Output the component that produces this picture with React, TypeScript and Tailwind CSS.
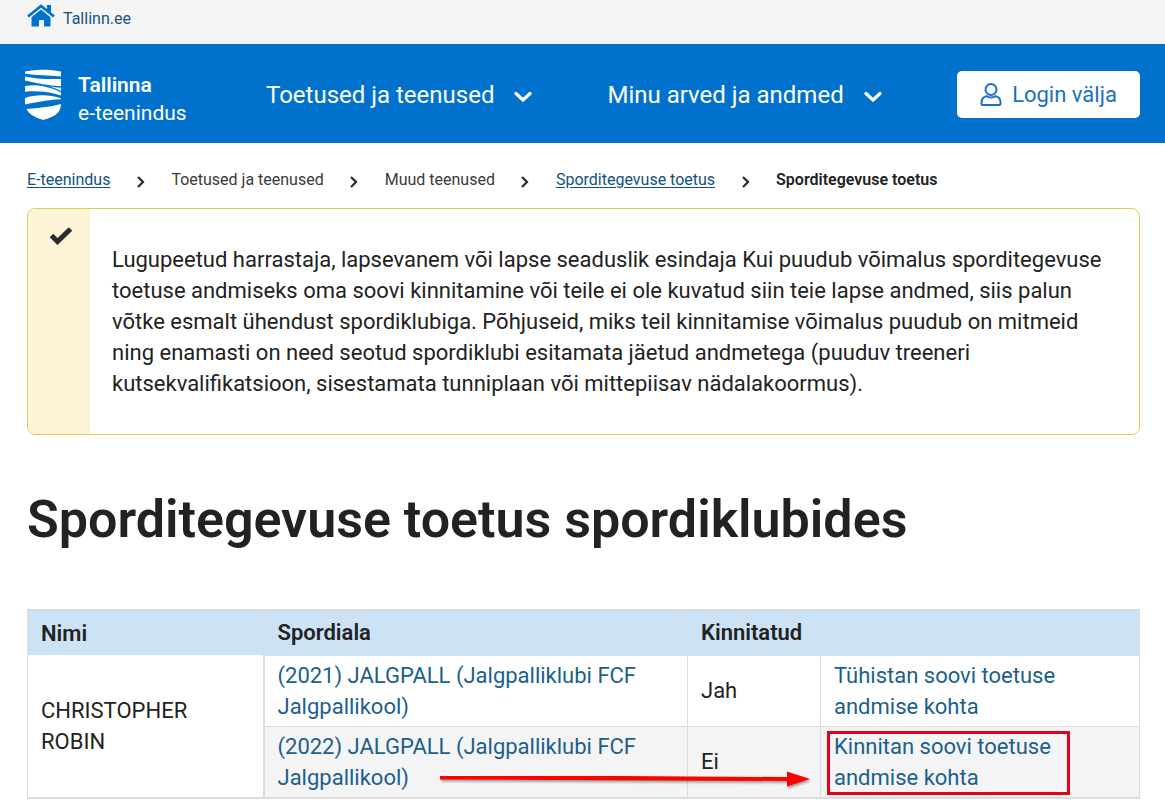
type Crumb = {
  label: string;
  href?: string;
};

type Activity = {
  sport: string;
  confirmed: string;
  action: string;
  highlighted?: boolean;
};

const menuItems = ["Toetused ja teenused", "Minu arved ja andmed"];

const crumbs: Crumb[] = [
  { label: "E-teenindus", href: "#e-teenindus" },
  { label: "Toetused ja teenused" },
  { label: "Muud teenused" },
  { label: "Sporditegevuse toetus", href: "#sporditegevuse-toetus" },
];

const activities: Activity[] = [
  {
    sport: "(2021) JALGPALL (Jalgpalliklubi FCF Jalgpallikool)",
    confirmed: "Jah",
    action: "Tühistan soovi toetuse andmise kohta",
  },
  {
    sport: "(2022) JALGPALL (Jalgpalliklubi FCF Jalgpallikool)",
    confirmed: "Ei",
    action: "Kinnitan soovi toetuse andmise kohta",
    highlighted: true,
  },
];

function HomeIcon() {
  return (
    <svg className="h-6 w-7" viewBox="0 0 28 24" fill="#0072ce" aria-hidden="true">
      <path d="M1 12.500 14 2l13 10.500" fill="none" stroke="#0072ce" strokeWidth="2.800" />
      <path d="M20 1h4v9l-4-3.300z" />
      <path d="M14 5.500 23.500 13.300v9.200H17V16h-5v6.500H4.500v-9.200z" />
    </svg>
  );
}

function ShieldLogo() {
  return (
    <svg className="h-[51px] w-9" viewBox="0 0 36 51" fill="#fff" aria-hidden="true">
      <path d="M0 2.500C12 0 25 0 36 2.500V7.500C24 6.500 12 6.500 0 4.800z" />
      <path d="M0 7.500C8 9.300 20 10.500 36 10v7.300C24 16.800 12 14.500 0 11.500z" />
      <path d="M0 17c7-1 13-.8 18 .2 7 1.300 13 3.500 18 6.300v3C26 22.800 12 21.500 0 22.700z" />
      <path d="M22 16.800c5 1.200 9 1.700 14 2v3.200c-4-2-9-4-14-5.200z" />
      <path d="M0 29c9-3.500 24-4 36 .3v1C22 31 12 33 0 35.500z" />
      <path d="M1.500 40c12-.8 23-2 34.500-5C36 43.500 30 47.500 18 51 9 48 4 45 1.500 40z" />
    </svg>
  );
}

function UserIcon() {
  return (
    <svg
      className="h-6 w-[22px]"
      viewBox="0 0 22 24"
      fill="none"
      stroke="#1a6fc4"
      strokeWidth="2"
      strokeLinejoin="round"
      aria-hidden="true"
    >
      <circle cx="11" cy="6.500" r="5.500" />
      <path d="M6.300 13.100C3.300 14 1.800 16 1.500 18.500v2.300c0 .8.500 1.200 1.200 1.200h16.600c.7 0 1.200-.4 1.200-1.200v-2.300c-.3-2.500-1.800-4.500-4.800-5.400-3 1.700-6.400 1.700-9.400 0z" />
    </svg>
  );
}

function CheckIcon() {
  return (
    <svg className="ml-1 h-6 w-6" viewBox="0 0 24 24" fill="none" aria-hidden="true">
      <path d="m2.500 11.500 6 6L21.500 5" stroke="#2b2b2b" strokeWidth="5" />
    </svg>
  );
}

function ChevronDown() {
  return (
    <svg className="mt-1 h-3 w-[18px]" viewBox="0 0 18 12" fill="none" aria-hidden="true">
      <path d="m2 2.500 7 6.500 7-6.500" stroke="#fff" strokeWidth="3.200" strokeLinecap="round" strokeLinejoin="round" />
    </svg>
  );
}

function ChevronRight() {
  return (
    <svg className="mt-1 h-3 w-2 shrink-0" viewBox="0 0 8 12" fill="none" aria-hidden="true">
      <path d="m1 1 5 5-5 5" stroke="#2b2b2b" strokeWidth="2.200" />
    </svg>
  );
}

function Arrow() {
  return (
    <svg
      className="pointer-events-none absolute bottom-2 left-[175px] z-10 h-5 w-[372px] drop-shadow-[1px_2px_1px_rgba(0,0,0,0.35)]"
      viewBox="0 0 372 20"
      aria-hidden="true"
    >
      <path d="M0 7h180l168 1v4L0 10.500z" fill="#f00" />
      <path d="M347 2.500v15l23-7.500z" fill="#f00" />
    </svg>
  );
}

function Header() {
  return (
    <header>
      <div className="flex h-11 items-start bg-[#f4f4f4] px-[27px] pt-1">
        <a href="#tallinn" className="flex gap-2 text-base leading-[30px] text-[#1b5480]">
          <HomeIcon />
          Tallinn.ee
        </a>
      </div>
      <div className="flex h-[99px] items-center bg-[#0072ce] px-[25px] pt-0.5 text-white">
        <a href="#avaleht" className="flex w-[241px] items-center gap-[17px] text-[21px] leading-7">
          <ShieldLogo />
          <span className="pt-2">
            <strong className="block font-semibold">Tallinna</strong>
            <span className="block">e-teenindus</span>
          </span>
        </a>
        <nav className="flex flex-1 items-center gap-[75px]">
          {menuItems.map((item) => (
            <button key={item} type="button" className="flex items-center gap-5 text-2xl">
              {item}
              <ChevronDown />
            </button>
          ))}
        </nav>
        <button
          type="button"
          className="flex h-[47px] w-[183px] items-center justify-center gap-2.5 rounded-[5px] bg-white text-[22px] text-[#1a6fc4]"
        >
          <UserIcon />
          Login välja
        </button>
      </div>
    </header>
  );
}

function Breadcrumbs() {
  return (
    <nav aria-label="Breadcrumb" className="pt-[25px]">
      <ol className="flex items-center text-base leading-6">
        {crumbs.map((crumb) => (
          <li key={crumb.label} className="flex items-center">
            {crumb.href ? (
              <a href={crumb.href} className="text-[#0f5381] underline underline-offset-2">
                {crumb.label}
              </a>
            ) : (
              <span className="text-[#3a3a3a]">{crumb.label}</span>
            )}
            <span className="flex w-[61px] justify-center">
              <ChevronRight />
            </span>
          </li>
        ))}
        <li aria-current="page" className="font-semibold text-[#222]">
          Sporditegevuse toetus
        </li>
      </ol>
    </nav>
  );
}

function Notice() {
  return (
    <section className="mt-4 flex overflow-hidden rounded-lg border border-[#dfce58]">
      <div className="flex w-[62px] shrink-0 justify-center bg-[#fdf4d6] pt-[15px]">
        <CheckIcon />
      </div>
      <p className="py-[35px] pr-5 pl-[22px]">
        Lugupeetud harrastaja, lapsevanem või lapse seaduslik esindaja Kui puudub võimalus sporditegevuse
        toetuse andmiseks oma soovi kinnitamine või teile ei ole kuvatud siin teie lapse andmed, siis palun
        võtke esmalt ühendust spordiklubiga. Põhjuseid, miks teil kinnitamise võimalus puudub on mitmeid
        ning enamasti on need seotud spordiklubi esitamata jäetud andmetega (puuduv treeneri
        kutsekvalifikatsioon, sisestamata tunniplaan või mittepiisav nädalakoormus).
      </p>
    </section>
  );
}

function ActivityTable() {
  return (
    <table className="mt-[58px] w-full table-fixed border-collapse border border-t-2 border-b-2 border-[#dadcde]">
      <colgroup>
        <col className="w-[236px]" />
        <col className="w-[424px]" />
        <col className="w-[133px]" />
        <col />
      </colgroup>
      <thead>
        <tr className="h-[45px] bg-[#cce3f5] text-left">
          <th className="border-r-2 border-[#d2dfe9] px-[13px] font-semibold">Nimi</th>
          <th className="border-r border-[#d2dfe9] px-[13px] font-semibold">Spordiala</th>
          <th className="px-[13px] font-semibold" colSpan={2}>
            Kinnitatud
          </th>
        </tr>
      </thead>
      <tbody>
        {activities.map((row, index) => (
          <tr key={row.sport} className="even:bg-[#f4f4f4]">
            {index === 0 && (
              <td rowSpan={activities.length} className="border-r-2 border-[#dadcde] bg-white px-[13px]">
                CHRISTOPHER ROBIN
              </td>
            )}
            <td className="relative border border-[#dadcde] px-[13px] py-1">
              <a href="#spordiala" className="text-[#1b5f8c]">
                {row.sport}
              </a>
              {row.highlighted && <Arrow />}
            </td>
            <td className="border border-[#dadcde] px-[13px] py-1">{row.confirmed}</td>
            <td className="relative border border-[#dadcde] px-[13px] py-1">
              <a href="#kinnitus" className="block w-60 text-[#1b5f8c]">
                {row.action}
              </a>
              {row.highlighted && (
                <span className="pointer-events-none absolute top-1 bottom-0.5 left-1.5 w-[243px] border-3 border-[#e60012]" />
              )}
            </td>
          </tr>
        ))}
      </tbody>
    </table>
  );
}

export default function App() {
  return (
    <div className="min-h-screen bg-white font-['Roboto','Liberation_Sans',sans-serif] text-[22px] leading-[31px] text-[#222]">
      <Header />
      <main className="pr-[25px] pb-3.5 pl-[27px]">
        <Breadcrumbs />
        <Notice />
        <h1 className="mt-[54px] text-[52px] leading-[62px] font-semibold">
          Sporditegevuse toetus spordiklubides
        </h1>
        <ActivityTable />
      </main>
    </div>
  );
}
